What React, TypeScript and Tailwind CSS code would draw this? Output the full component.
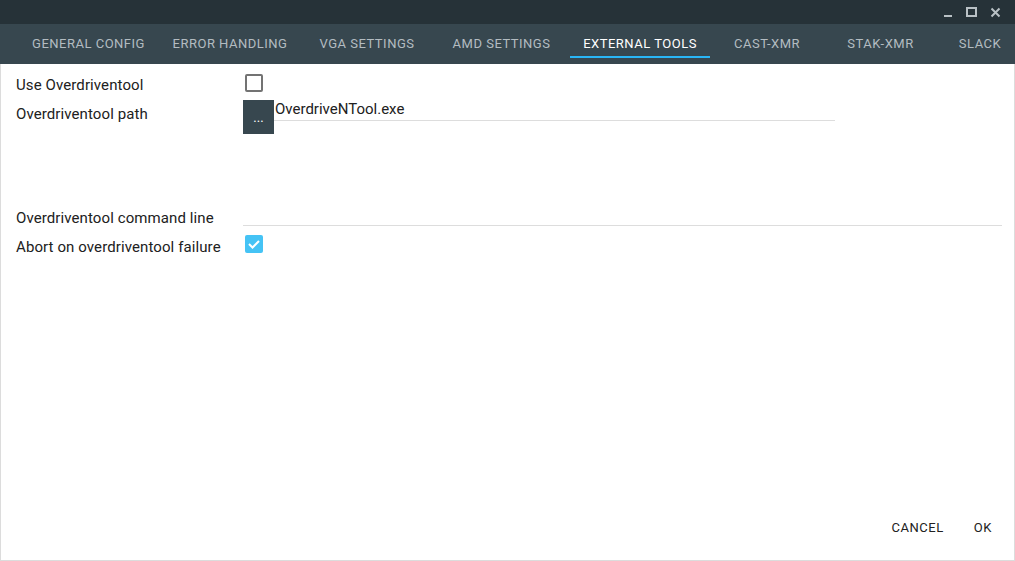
import React from "react";

const tabs: { label: string; w: string; active?: boolean }[] = [
  { label: "GENERAL CONFIG", w: "w-[141px]" },
  { label: "ERROR HANDLING", w: "w-[142px]" },
  { label: "VGA SETTINGS", w: "w-[132px]" },
  { label: "AMD SETTINGS", w: "w-[137px]" },
  { label: "EXTERNAL TOOLS", w: "w-[140px]", active: true },
  { label: "CAST-XMR", w: "w-[114px]" },
  { label: "STAK-XMR", w: "w-[113px]" },
  { label: "SLACK", w: "w-[86px]" },
];

export default function App() {
  return (
    <div
      className="w-[1015px] h-[561px] flex flex-col overflow-hidden bg-white"
      style={{ fontFamily: "Roboto, 'Liberation Sans', sans-serif" }}
    >
      {/* title bar */}
      <div className="h-[24px] bg-[#263238] flex items-center justify-end pr-[14px] gap-[13px] shrink-0">
        <svg width="10" height="10" viewBox="0 0 10 10">
          <rect x="1" y="8" width="8" height="2" fill="#b9c1c5" />
        </svg>
        <svg width="11" height="10" viewBox="0 0 11 10">
          <rect x="1" y="1" width="9" height="8" fill="none" stroke="#b9c1c5" strokeWidth="2" />
        </svg>
        <svg width="11" height="11" viewBox="0 0 11 11">
          <path d="M1.5 1.5 L9.5 9.5 M9.5 1.5 L1.5 9.5" stroke="#b9c1c5" strokeWidth="2" />
        </svg>
      </div>
      {/* tabs */}
      <div className="h-[40px] bg-[#37474f] flex pl-[18px] shrink-0 overflow-hidden">
        {tabs.map((t) => (
          <div
            key={t.label}
            className={`${t.w} shrink-0 relative flex items-center justify-center text-[13px] font-normal tracking-[0.5px] ${
              t.active ? "text-white" : "text-[#b3bcc1]"
            }`}
          >
            <span className="-mt-[1px]">{t.label}</span>
            {t.active && (
              <div className="absolute left-0 right-0 bottom-[6px] h-[2px] bg-[#29b6f6]" />
            )}
          </div>
        ))}
      </div>
      {/* content */}
      <div className="flex-1 flex flex-col border-l border-r border-b border-[#dcdcdc] text-[15px] tracking-[0.1px] text-[#212121]">
        <div className="flex-1 flex flex-col pl-[15px] pr-[12px]">
          <div className="flex items-center h-[20px] mt-[9px]">
            <div className="w-[227px] leading-[18px] pt-[3px]">Use Overdriventool</div>
            <div className="ml-[2px] w-[18px] h-[18px] rounded-[2px] border-2 border-[#737373]" />
          </div>
          <div className="flex h-[34px] mt-[7px]">
            <div className="w-[227px] leading-[18px] pt-[5px]">Overdriventool path</div>
            <div className="w-[31px] h-[34px] bg-[#37474f] text-white text-[13px] flex items-center justify-center pt-[2px] shrink-0">
              ...
            </div>
            <div className="w-[561px] h-[21px] border-b border-[#dddddd] flex items-start text-[15px] tracking-normal leading-[18px] pl-[1px]">
              OverdriveNTool.exe
            </div>
          </div>
          <div className="flex items-start h-[27px] mt-[65px]">
            <div className="w-[227px] leading-[18px] pt-[10px]">Overdriventool command line</div>
            <div className="flex-1 h-full border-b border-[#dddddd]" />
          </div>
          <div className="flex items-center h-[22px] mt-[7px]">
            <div className="w-[227px] leading-[18px] pt-[5px]">Abort on overdriventool failure</div>
            <div className="ml-[2px] w-[18px] h-[18px] rounded-[2px] bg-[#45c3f5] flex items-center justify-center">
              <svg width="14" height="12" viewBox="0 0 14 12">
                <path d="M2 6 L5.5 9.5 L12 3" fill="none" stroke="white" strokeWidth="2" />
              </svg>
            </div>
          </div>
        </div>
        <div className="flex justify-end items-center h-[54px] pr-[22px] gap-[30px] text-[13px] font-normal tracking-[0.55px] text-[#212121] pb-[11px]">
          <span>CANCEL</span>
          <span>OK</span>
        </div>
      </div>
    </div>
  );
}
